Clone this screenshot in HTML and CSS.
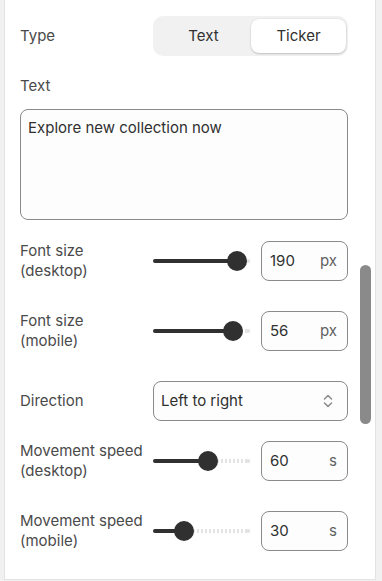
FILE: index.html
```html
<!DOCTYPE html>
<html lang="en">
<head>
    <meta charset="UTF-8">
    <meta name="viewport" content="width=device-width, initial-scale=1.0">
    <title>Ticker settings</title>
    <link rel="stylesheet" href="styles.css">
</head>
<body>
    <div class="panel">
        <div class="row">
            <div class="label">Type</div>
            <div class="segmented">
                <button class="seg">Text</button>
                <button class="seg active">Ticker</button>
            </div>
        </div>

        <div class="field-label">Text</div>
        <div class="textarea">Explore new collection now</div>

        <div class="rows">
            <div class="row">
                <div class="label">Font size<br>(desktop)</div>
                <div class="range-field">
                    <div class="slider" style="--pos: 84px">
                        <div class="track-rest"></div>
                        <div class="track-fill"></div>
                        <div class="thumb"></div>
                    </div>
                    <div class="number"><span>190</span><span class="unit">px</span></div>
                </div>
            </div>

            <div class="row">
                <div class="label">Font size<br>(mobile)</div>
                <div class="range-field">
                    <div class="slider" style="--pos: 80px">
                        <div class="track-rest"></div>
                        <div class="track-fill"></div>
                        <div class="thumb"></div>
                    </div>
                    <div class="number"><span>56</span><span class="unit">px</span></div>
                </div>
            </div>

            <div class="row row-tight">
                <div class="label">Direction</div>
                <div class="select">
                    <span>Left to right</span>
                    <svg class="chevrons" width="12" height="16" viewBox="0 0 12 16">
                        <path d="M2.5 6 L6 2.5 L9.5 6" fill="none" stroke="#8a8a8a" stroke-width="1.5" stroke-linecap="round" stroke-linejoin="round"/>
                        <path d="M2.5 10 L6 13.5 L9.5 10" fill="none" stroke="#8a8a8a" stroke-width="1.5" stroke-linecap="round" stroke-linejoin="round"/>
                    </svg>
                </div>
            </div>

            <div class="row">
                <div class="label">Movement speed<br>(desktop)</div>
                <div class="range-field">
                    <div class="slider" style="--pos: 55px">
                        <div class="track-rest"></div>
                        <div class="track-fill"></div>
                        <div class="thumb"></div>
                    </div>
                    <div class="number"><span>60</span><span class="unit">s</span></div>
                </div>
            </div>

            <div class="row">
                <div class="label">Movement speed<br>(mobile)</div>
                <div class="range-field">
                    <div class="slider" style="--pos: 31px">
                        <div class="track-rest"></div>
                        <div class="track-fill"></div>
                        <div class="thumb"></div>
                    </div>
                    <div class="number"><span>30</span><span class="unit">s</span></div>
                </div>
            </div>
        </div>

        <div class="scrollbar"></div>
    </div>
</body>
</html>
```

FILE: styles.css
```css
body {
    margin: 0;
    background-color: #f1f1f1;
    font-family: Inter, "Noto Sans", Arial, sans-serif;
    font-size: 15px;
    line-height: 20px;
    color: #303030;
}

.panel {
    position: relative;
    box-sizing: border-box;
    width: 372px;
    height: 580px;
    margin-left: 4px;
    padding: 16px 27px 0 15px;
    background: #ffffff;
    border-left: 1px solid #e3e3e3;
    border-right: 1px solid #e3e3e3;
    border-bottom: 1px solid #e3e3e3;
    overflow: hidden;
}

.row {
    display: grid;
    grid-template-columns: 133px 1fr;
    align-items: center;
    height: 40px;
}

.row-tight {
    margin-bottom: -10px;
}

.label {
    color: #4a4a4a;
}

.segmented {
    display: flex;
    height: 40px;
    box-sizing: border-box;
    padding: 3px 2px 3px 3px;
    background: #f1f1f1;
    border-radius: 10px;
}

.seg {
    flex: 1;
    border: none;
    background: transparent;
    font: inherit;
    color: #303030;
    border-radius: 8px;
    padding: 0;
}

.seg.active {
    background: #ffffff;
    box-shadow: 0 1px 2px rgba(0, 0, 0, 0.18), 0 0 0 0.5px rgba(0, 0, 0, 0.06);
}

.field-label {
    margin-top: 20px;
    color: #4a4a4a;
}

.textarea {
    box-sizing: border-box;
    height: 111px;
    margin-top: 13px;
    padding: 8px 7px;
    background: #fdfdfd;
    border: 1px solid #8a8a8a;
    border-radius: 8px;
}

.rows {
    display: flex;
    flex-direction: column;
    gap: 30px;
    margin-top: 21px;
}

.range-field {
    display: flex;
    align-items: center;
    gap: 11px;
}

.slider {
    position: relative;
    width: 97px;
    height: 20px;
}

.track-rest {
    position: absolute;
    left: 0;
    right: 0;
    top: 8px;
    height: 4px;
    border-radius: 2px;
    background: repeating-linear-gradient(90deg, #e3e3e3 0 2px, transparent 2px 4px);
}

.track-rest::after {
    content: "";
    position: absolute;
    right: 0;
    top: 0;
    width: 4px;
    height: 4px;
    border-radius: 2px;
    background: #e3e3e3;
}

.track-fill {
    position: absolute;
    left: 0;
    top: 8px;
    width: var(--pos);
    height: 4px;
    border-radius: 2px;
    background: #303030;
}

.thumb {
    position: absolute;
    top: 0;
    left: calc(var(--pos) - 10px);
    width: 20px;
    height: 20px;
    border-radius: 50%;
    background: #303030;
}

.number {
    flex: 1;
    display: flex;
    justify-content: space-between;
    align-items: center;
    box-sizing: border-box;
    height: 40px;
    padding: 0 10px 0 8px;
    background: #fdfdfd;
    border: 1px solid #8a8a8a;
    border-radius: 8px;
}

.unit {
    color: #616161;
}

.select {
    display: flex;
    justify-content: space-between;
    align-items: center;
    box-sizing: border-box;
    height: 40px;
    padding: 0 13px 0 7px;
    background: #fdfdfd;
    border: 1px solid #8a8a8a;
    border-radius: 8px;
}

.scrollbar {
    position: absolute;
    left: 355px;
    top: 265px;
    width: 11px;
    height: 159px;
    border-radius: 6px;
    background: #8a8a8a;
}
```
